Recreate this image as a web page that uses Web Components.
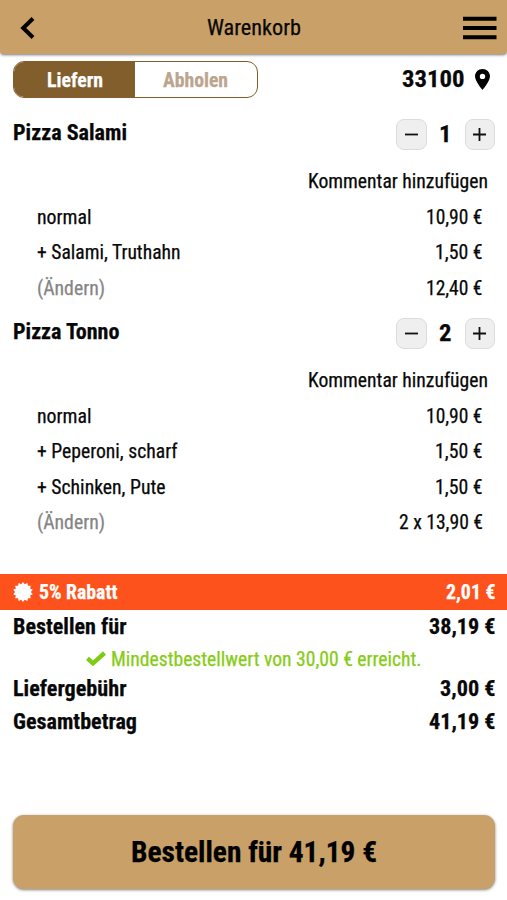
<!DOCTYPE html>
<html lang="de">
<head>
<meta charset="utf-8">
<meta name="viewport" content="width=device-width, initial-scale=1">
<title>Warenkorb</title>
<style>
  html, body {
    margin: 0;
    height: 100%;
    background: #fff;
  }
  body {
    font-family: "Roboto Condensed", Roboto, "Liberation Sans", sans-serif;
    font-stretch: 75%;
    font-size: 20px;
    color: #080808;
    -webkit-text-stroke: .25px;
    overflow: hidden;
  }
</style>
</head>
<body>
<app-cart></app-cart>

<script>
// Narrow text: the label is squeezed to the width given in "w"
class SlimText extends HTMLElement {
  constructor() {
    super();
    this.attachShadow({ mode: "open" });
    this.shadowRoot.innerHTML = `
      <style>
        :host { display: block; flex: none; white-space: nowrap; line-height: 1.2; }
        span { display: inline-block; transform-origin: 0 50%; }
      </style>
      <span><slot></slot></span>
    `;
  }

  connectedCallback() {
    const width = parseFloat(this.getAttribute("w"));
    const span = this.shadowRoot.querySelector("span");
    this.style.width = width + "px";
    span.style.transform = `scaleX(${width / span.getBoundingClientRect().width})`;
  }
}

class CartHeader extends HTMLElement {
  constructor() {
    super();
    this.attachShadow({ mode: "open" });
    this.shadowRoot.innerHTML = `
      <style>
        :host {
          display: grid;
          grid-template-columns: 1fr auto 1fr;
          align-items: center;
          box-sizing: border-box;
          height: 54px;
          padding: 2px 10px 0 20px;
          background: #c8a068;
          border-radius: 0 0 4px 4px;
          box-shadow: 0 1px 3px rgba(0, 0, 0, .55);
          font-size: 22px;
        }
        svg { display: block; }
        .menu { justify-self: end; }
        .title { margin-right: 9px; }
      </style>
      <svg width="16" height="22" viewBox="0 0 16 22"><path d="M13 1.500 3.200 11l9.800 9.500" fill="none" stroke="#000" stroke-width="4"/></svg>
      <div class="title"><slot></slot></div>
      <svg class="menu" width="34" height="24" viewBox="0 0 34 24"><path d="M0 2.8h33.5M0 12h33.5M0 21.2h33.5" stroke="#000" stroke-width="4"/></svg>
    `;
  }
}

class DeliverySwitch extends HTMLElement {
  constructor() {
    super();
    this.attachShadow({ mode: "open" });
    this.shadowRoot.innerHTML = `
      <style>
        :host {
          display: flex;
          box-sizing: border-box;
          width: 245px;
          height: 37px;
          border: 1.5px solid #825e2d;
          border-radius: 11px;
          overflow: hidden;
          font-weight: bold;
        }
        div { display: flex; align-items: center; justify-content: center; }
        .on { width: 121px; background: #825e2d; color: #fff; }
        .off { flex: 1; padding-right: 2px; color: #bca58e; }
      </style>
      <div class="on"><slim-text w="56">Liefern</slim-text></div>
      <div class="off"><slim-text w="65">Abholen</slim-text></div>
    `;
  }
}

class QuantityStepper extends HTMLElement {
  constructor() {
    super();
    this.attachShadow({ mode: "open" });
    this.shadowRoot.innerHTML = `
      <style>
        :host { display: flex; align-items: center; justify-content: space-between; width: 99px; }
        .btn {
          box-sizing: border-box;
          width: 30.5px;
          height: 31px;
          display: flex;
          align-items: center;
          justify-content: center;
          border: 1px solid #dcdcdc;
          border-radius: 8px;
          background: #efefef;
        }
        .count { font-size: 24px; font-weight: bold; }
      </style>
      <div class="btn"><svg width="15" height="15" viewBox="0 0 15 15"><path d="M1 7.5h13" stroke="#111" stroke-width="1.8"/></svg></div>
      <div class="count"><slim-text w="12.5">${this.getAttribute("count")}</slim-text></div>
      <div class="btn"><svg width="15" height="15" viewBox="0 0 15 15"><path d="M1 7.5h13M7.5 1v13" stroke="#111" stroke-width="1.8"/></svg></div>
    `;
  }
}

class CartItem extends HTMLElement {
  constructor() {
    super();
    this.attachShadow({ mode: "open" });
    this.shadowRoot.innerHTML = `
      <style>
        :host { display: block; padding: 0 12px 12.5px 13px; }
        .head { display: flex; justify-content: space-between; height: 31px; }
        .name { padding-top: 1px; font-size: 22px; font-weight: bold; }
        .comment { display: flex; justify-content: flex-end; align-items: center; height: 36px; padding: 13px 7px .5px 0; }
      </style>
      <div class="head">
        <div class="name"><slot name="name"></slot></div>
        <quantity-stepper count="${this.getAttribute("count")}"></quantity-stepper>
      </div>
      <div class="comment"><slim-text w="180">Kommentar hinzufügen</slim-text></div>
      <slot></slot>
    `;
  }
}

class CartLine extends HTMLElement {
  constructor() {
    super();
    this.attachShadow({ mode: "open" });
    this.shadowRoot.innerHTML = `
      <style>
        :host { display: flex; justify-content: space-between; align-items: center; height: 35.3px; padding: 0 12.5px 0 24px; }
        :host([muted]) ::slotted(:first-child) { color: #858585; }
      </style>
      <slot></slot>
    `;
  }
}

class DiscountBar extends HTMLElement {
  constructor() {
    super();
    this.attachShadow({ mode: "open" });
    // seal with 14 teeth
    let points = [];
    for (let i = 0; i < 28; i++) {
      const r = i % 2 ? 7.9 : 10;
      const a = (i * Math.PI) / 14;
      points.push(`${(10 + r * Math.sin(a)).toFixed(2)},${(10 - r * Math.cos(a)).toFixed(2)}`);
    }
    this.shadowRoot.innerHTML = `
      <style>
        :host {
          display: flex;
          align-items: center;
          height: 36.5px;
          padding: 0 12px 0 13px;
          background: #fe521d;
          color: #fff;
          font-weight: bold;
        }
        svg { margin-right: 6px; }
        ::slotted(:last-child) { margin-left: auto; }
      </style>
      <svg width="20" height="20" viewBox="0 0 20 20"><polygon points="${points.join(" ")}" fill="#fff"/></svg>
      <slot></slot>
    `;
  }
}

class SumLine extends HTMLElement {
  constructor() {
    super();
    this.attachShadow({ mode: "open" });
    this.shadowRoot.innerHTML = `
      <style>
        :host {
          display: flex;
          justify-content: space-between;
          align-items: center;
          height: 33px;
          padding: 0 12px 0 12.5px;
          font-size: 22px;
          font-weight: bold;
        }
      </style>
      <slot></slot>
    `;
  }
}

class MinimumNote extends HTMLElement {
  constructor() {
    super();
    this.attachShadow({ mode: "open" });
    this.shadowRoot.innerHTML = `
      <style>
        :host { display: flex; align-items: center; justify-content: center; gap: 5px; height: 29px; color: #86cc14; }
      </style>
      <svg width="20" height="15" viewBox="0 0 20 15"><path d="M1.500 7.400 7 12.300 18.500 2" fill="none" stroke="#7ecb12" stroke-width="4.400"/></svg>
      <slot></slot>
    `;
  }
}

class OrderButton extends HTMLElement {
  constructor() {
    super();
    this.attachShadow({ mode: "open" });
    this.shadowRoot.innerHTML = `
      <style>
        :host {
          display: flex;
          align-items: center;
          justify-content: center;
          height: 73.5px;
          margin: auto 12px 11.5px 13px;
          background: #c8a068;
          border-radius: 11px;
          box-shadow: 0 1px 3px rgba(0, 0, 0, .5);
          font-size: 30px;
          font-weight: bold;
          color: #000;
        }
      </style>
      <slot></slot>
    `;
  }
}

class AppCart extends HTMLElement {
  constructor() {
    super();
    this.attachShadow({ mode: "open" });
    this.shadowRoot.innerHTML = `
      <style>
        :host { display: flex; flex-direction: column; height: 900px; }
        .top {
          display: flex;
          justify-content: space-between;
          align-items: center;
          padding: 7px 17px 21px 13px;
        }
        .zip { display: flex; align-items: center; gap: 11px; font-size: 24px; font-weight: bold; }
        .sums { padding-top: 1px; }
        discount-bar { margin-top: 21.5px; }
      </style>
      <cart-header><slim-text w="94">Warenkorb</slim-text></cart-header>
      <div class="top">
        <delivery-switch></delivery-switch>
        <div class="zip">
          <slim-text w="62.5">33100</slim-text>
          <svg width="15" height="21" viewBox="0 0 15 21"><path fill-rule="evenodd" d="M7.5 0C3.3 0 0 3.2 0 7.3C0 12.5 7.5 21 7.5 21S15 12.5 15 7.3C15 3.2 11.7 0 7.5 0ZM7.5 4.7a2.7 2.7 0 1 1 0 5.4a2.7 2.7 0 0 1 0-5.4Z"/></svg>
        </div>
      </div>
      <cart-item count="1">
        <slim-text slot="name" w="114">Pizza Salami</slim-text>
        <cart-line><slim-text w="54.5">normal</slim-text><slim-text w="56.5">10,90 €</slim-text></cart-line>
        <cart-line><slim-text w="143.5">+ Salami, Truthahn</slim-text><slim-text w="47.5">1,50 €</slim-text></cart-line>
        <cart-line muted><slim-text w="68">(Ändern)</slim-text><slim-text w="56.5">12,40 €</slim-text></cart-line>
      </cart-item>
      <cart-item count="2">
        <slim-text slot="name" w="106.5">Pizza Tonno</slim-text>
        <cart-line><slim-text w="54.5">normal</slim-text><slim-text w="56.5">10,90 €</slim-text></cart-line>
        <cart-line><slim-text w="140.5">+ Peperoni, scharf</slim-text><slim-text w="47.5">1,50 €</slim-text></cart-line>
        <cart-line><slim-text w="128.5">+ Schinken, Pute</slim-text><slim-text w="47.5">1,50 €</slim-text></cart-line>
        <cart-line muted><slim-text w="68">(Ändern)</slim-text><slim-text w="84">2 x 13,90 €</slim-text></cart-line>
      </cart-item>
      <discount-bar><slim-text w="78.5">5% Rabatt</slim-text><slim-text w="49.5">2,01 €</slim-text></discount-bar>
      <div class="sums">
        <sum-line><slim-text w="113.5">Bestellen für</slim-text><slim-text w="66.5">38,19 €</slim-text></sum-line>
        <minimum-note><slim-text w="310.5">Mindestbestellwert von 30,00 € erreicht.</slim-text></minimum-note>
        <sum-line><slim-text w="113.5">Liefergebühr</slim-text><slim-text w="55.5">3,00 €</slim-text></sum-line>
        <sum-line><slim-text w="124">Gesamtbetrag</slim-text><slim-text w="66.5">41,19 €</slim-text></sum-line>
      </div>
      <order-button><slim-text w="246">Bestellen für 41,19 €</slim-text></order-button>
    `;
  }
}

customElements.define("slim-text", SlimText);
customElements.define("cart-header", CartHeader);
customElements.define("delivery-switch", DeliverySwitch);
customElements.define("quantity-stepper", QuantityStepper);
customElements.define("cart-item", CartItem);
customElements.define("cart-line", CartLine);
customElements.define("discount-bar", DiscountBar);
customElements.define("sum-line", SumLine);
customElements.define("minimum-note", MinimumNote);
customElements.define("order-button", OrderButton);
customElements.define("app-cart", AppCart);
</script>
</body>
</html>
